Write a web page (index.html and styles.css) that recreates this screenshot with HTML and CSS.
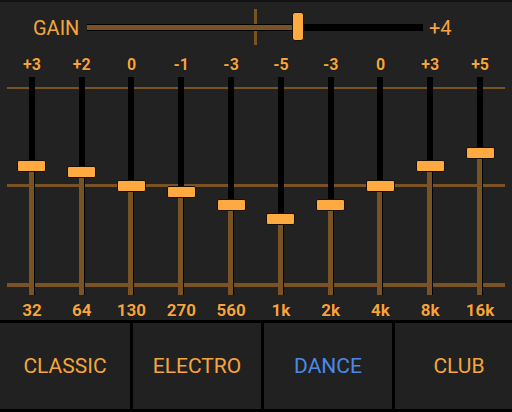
FILE: index.html
```html
<!DOCTYPE html>
<html>
<head>
<meta charset="utf-8">
<link rel="stylesheet" href="styles.css">
</head>
<body>
<div class="app">
  <div class="topstrip"></div>
  <div class="gain-row">
    <span class="gain-label">GAIN</span>
    <div class="gain-slider">
      <div class="gain-tick"></div>
      <div class="gain-track"><div class="gain-fill" style="width:211px"></div></div>
      <div class="gain-thumb" style="left:205px"></div>
    </div>
    <span class="gain-value">+4</span>
  </div>
  <div class="eq">
    <div class="band">
      <div class="band-value">+3</div>
      <div class="slot"><div class="track"><div class="fill" style="height:129.3px"></div></div><div class="thumb" style="top:82.7px"></div></div>
      <div class="band-freq">32</div>
    </div>
    <div class="band">
      <div class="band-value">+2</div>
      <div class="slot"><div class="track"><div class="fill" style="height:122.7px"></div></div><div class="thumb" style="top:89.3px"></div></div>
      <div class="band-freq">64</div>
    </div>
    <div class="band">
      <div class="band-value">0</div>
      <div class="slot"><div class="track"><div class="fill" style="height:109.5px"></div></div><div class="thumb" style="top:102.5px"></div></div>
      <div class="band-freq">130</div>
    </div>
    <div class="band">
      <div class="band-value">-1</div>
      <div class="slot"><div class="track"><div class="fill" style="height:102.9px"></div></div><div class="thumb" style="top:109.1px"></div></div>
      <div class="band-freq">270</div>
    </div>
    <div class="band">
      <div class="band-value">-3</div>
      <div class="slot"><div class="track"><div class="fill" style="height:89.7px"></div></div><div class="thumb" style="top:122.3px"></div></div>
      <div class="band-freq">560</div>
    </div>
    <div class="band">
      <div class="band-value">-5</div>
      <div class="slot"><div class="track"><div class="fill" style="height:76.5px"></div></div><div class="thumb" style="top:135.5px"></div></div>
      <div class="band-freq">1k</div>
    </div>
    <div class="band">
      <div class="band-value">-3</div>
      <div class="slot"><div class="track"><div class="fill" style="height:89.7px"></div></div><div class="thumb" style="top:122.3px"></div></div>
      <div class="band-freq">2k</div>
    </div>
    <div class="band">
      <div class="band-value">0</div>
      <div class="slot"><div class="track"><div class="fill" style="height:109.5px"></div></div><div class="thumb" style="top:102.5px"></div></div>
      <div class="band-freq">4k</div>
    </div>
    <div class="band">
      <div class="band-value">+3</div>
      <div class="slot"><div class="track"><div class="fill" style="height:129.3px"></div></div><div class="thumb" style="top:82.7px"></div></div>
      <div class="band-freq">8k</div>
    </div>
    <div class="band">
      <div class="band-value">+5</div>
      <div class="slot"><div class="track"><div class="fill" style="height:142.5px"></div></div><div class="thumb" style="top:69.5px"></div></div>
      <div class="band-freq">16k</div>
    </div>
  </div>
  <div class="presets">
    <div class="preset">CLASSIC</div>
    <div class="preset">ELECTRO</div>
    <div class="preset active">DANCE</div>
    <div class="preset">CLUB</div>
  </div>
</div>
</body>
</html>
```

FILE: styles.css
```css
html, body {
  margin: 0;
  padding: 0;
  background: #000;
}

.app {
  width: 512px;
  height: 412px;
  overflow: hidden;
  background: #222222;
  font-family: Roboto, "Liberation Sans", sans-serif;
  color: #f6a53e;
}

.topstrip {
  height: 2px;
  background: #121212;
}

/* gain row */
.gain-row {
  display: flex;
  align-items: center;
  height: 36px;
  margin-top: 7px;
  padding-left: 33px;
}

.gain-label {
  width: 54px;
  font-size: 20px;
  line-height: 24px;
  margin-top: 1px;
}

.gain-value {
  margin-left: 6px;
  font-size: 20px;
  line-height: 24px;
  margin-top: 1px;
}

.gain-slider {
  position: relative;
  width: 336px;
  height: 36px;
  display: flex;
  align-items: center;
}

.gain-tick {
  position: absolute;
  left: 167px;
  top: 0;
  width: 3px;
  height: 36px;
  background: #7a5324;
}

.gain-track {
  position: relative;
  flex: 1;
  height: 7px;
  background: #000;
}

.gain-fill {
  height: 5px;
  margin-top: 1px;
  background: #7a5324;
}

.gain-thumb {
  position: absolute;
  top: 3px;
  width: 10px;
  height: 27px;
  background: #ffaa40;
  border: 1px solid #1a1208;
  border-radius: 3px;
}

/* equalizer */
.eq {
  display: grid;
  grid-template-columns: repeat(10, 1fr);
  margin: 10px 7px 0 7px;
  width: 498px;
  background-image: linear-gradient(to bottom,
    transparent 31.7px, #7a5324 31.7px, #7a5324 34.3px,
    transparent 34.3px, transparent 129.3px, #7a5324 129.3px, #7a5324 132.3px,
    transparent 132.3px, transparent 228.3px, #7a5324 228.3px, #7a5324 231.7px,
    transparent 231.7px);
}

.band {
  display: flex;
  flex-direction: column;
  align-items: center;
}

.band-value {
  height: 20px;
  font-size: 16px;
  line-height: 20px;
  font-weight: bold;
  text-shadow: 0 0 1px #000;
}

.slot {
  position: relative;
  width: 29px;
  height: 218px;
  margin-top: 2px;
  display: flex;
  justify-content: center;
}

.track {
  width: 6px;
  height: 218px;
  background: #000;
  display: flex;
  align-items: flex-end;
}

.fill {
  width: 5px;
  background: #7a5324;
}

.thumb {
  position: absolute;
  left: 0;
  width: 27px;
  height: 10px;
  background: #ffaa40;
  border: 1px solid #1a1208;
  border-radius: 2px;
}

.band-freq {
  height: 20px;
  margin-top: 5px;
  font-size: 17px;
  line-height: 20px;
  font-weight: bold;
  text-shadow: 0 0 1px #000;
}

/* presets */
.presets {
  display: grid;
  grid-template-columns: 130px 128px 128px 128px;
  column-gap: 3px;
  border-top: 3px solid #000;
  border-bottom: 3px solid #000;
  background: #000;
  width: 523px;
}

.preset {
  height: 86px;
  background: #212121;
  display: flex;
  align-items: center;
  justify-content: center;
  font-size: 21px;
  color: #f6a53e;
}

.preset.active {
  color: #4a8ae6;
}
```
